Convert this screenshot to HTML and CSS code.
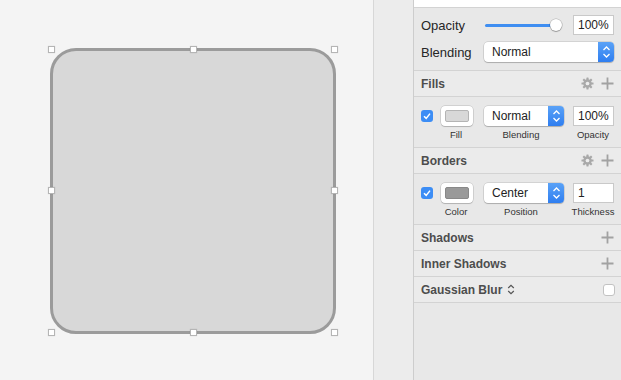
FILE: index.html
```html
<!DOCTYPE html>
<html>
<head>
<meta charset="utf-8">
<link rel="stylesheet" href="styles.css">
</head>
<body>
<div class="app">
  <div class="canvas">
    <div class="shape"></div>
    <span class="handle" style="left:48px;top:46px"></span>
    <span class="handle" style="left:190px;top:46px"></span>
    <span class="handle" style="left:331px;top:46px"></span>
    <span class="handle" style="left:48px;top:187px"></span>
    <span class="handle" style="left:331px;top:187px"></span>
    <span class="handle" style="left:48px;top:329px"></span>
    <span class="handle" style="left:190px;top:329px"></span>
    <span class="handle" style="left:331px;top:329px"></span>
  </div>
  <div class="gutter"></div>
  <div class="inspector">
    <div class="topstrip"></div>
    <div class="general">
      <div class="grow">
        <span class="glabel">Opacity</span>
        <div class="slider"><div class="track"></div><div class="knob"></div></div>
        <div class="field">100%</div>
      </div>
      <div class="grow">
        <span class="glabel">Blending</span>
        <div class="select wide"><span class="seltext">Normal</span><span class="stepper"><svg width="9" height="14" viewBox="0 0 9 14"><path d="M1.5 5 L4.5 2 L7.5 5 M1.5 9 L4.5 12 L7.5 9" fill="none" stroke="#fff" stroke-width="1.3"/></svg></span></div>
      </div>
    </div>

    <div class="head">
      <span class="htitle">Fills</span>
      <span class="hicons">
        <svg class="gear" width="13" height="13" viewBox="0 0 14 14"><g fill="#a9a9a9"><circle cx="7" cy="7" r="4.6"/><rect x="5.8" y="0.5" width="2.4" height="13" rx="0.5"/><rect x="0.5" y="5.8" width="13" height="2.4" rx="0.5"/><rect x="5.8" y="0.5" width="2.4" height="13" rx="0.5" transform="rotate(45 7 7)"/><rect x="5.8" y="0.5" width="2.4" height="13" rx="0.5" transform="rotate(-45 7 7)"/></g><circle cx="7" cy="7" r="2" fill="#ececec"/></svg>
        <svg class="plus" width="13" height="13" viewBox="0 0 13 13"><path d="M6.5 0.5 V12.5 M0.5 6.5 H12.5" stroke="#a2a2a2" stroke-width="1.8"/></svg>
      </span>
    </div>
    <div class="content">
      <div class="crow">
        <span class="check"><svg width="12" height="12" viewBox="0 0 12 12"><path d="M3 6.2 L5.2 8.4 L9 3.6" fill="none" stroke="#fff" stroke-width="1.5"/></svg></span>
        <span class="swatch"><span class="swcol fillcol"></span></span>
        <div class="select narrow"><span class="seltext">Normal</span><span class="stepper"><svg width="9" height="14" viewBox="0 0 9 14"><path d="M1.5 5 L4.5 2 L7.5 5 M1.5 9 L4.5 12 L7.5 9" fill="none" stroke="#fff" stroke-width="1.3"/></svg></span></div>
        <div class="field">100%</div>
      </div>
      <div class="lrow">
        <span class="l1">Fill</span><span class="l2">Blending</span><span class="l3">Opacity</span>
      </div>
    </div>

    <div class="head">
      <span class="htitle">Borders</span>
      <span class="hicons">
        <svg class="gear" width="13" height="13" viewBox="0 0 14 14"><g fill="#a9a9a9"><circle cx="7" cy="7" r="4.6"/><rect x="5.8" y="0.5" width="2.4" height="13" rx="0.5"/><rect x="0.5" y="5.8" width="13" height="2.4" rx="0.5"/><rect x="5.8" y="0.5" width="2.4" height="13" rx="0.5" transform="rotate(45 7 7)"/><rect x="5.8" y="0.5" width="2.4" height="13" rx="0.5" transform="rotate(-45 7 7)"/></g><circle cx="7" cy="7" r="2" fill="#ececec"/></svg>
        <svg class="plus" width="13" height="13" viewBox="0 0 13 13"><path d="M6.5 0.5 V12.5 M0.5 6.5 H12.5" stroke="#a2a2a2" stroke-width="1.8"/></svg>
      </span>
    </div>
    <div class="content">
      <div class="crow">
        <span class="check"><svg width="12" height="12" viewBox="0 0 12 12"><path d="M3 6.2 L5.2 8.4 L9 3.6" fill="none" stroke="#fff" stroke-width="1.5"/></svg></span>
        <span class="swatch"><span class="swcol bordercol"></span></span>
        <div class="select narrow"><span class="seltext">Center</span><span class="stepper"><svg width="9" height="14" viewBox="0 0 9 14"><path d="M1.5 5 L4.5 2 L7.5 5 M1.5 9 L4.5 12 L7.5 9" fill="none" stroke="#fff" stroke-width="1.3"/></svg></span></div>
        <div class="field">1</div>
      </div>
      <div class="lrow">
        <span class="l1">Color</span><span class="l2">Position</span><span class="l3">Thickness</span>
      </div>
    </div>

    <div class="head">
      <span class="htitle">Shadows</span>
      <span class="hicons"><svg class="plus" width="13" height="13" viewBox="0 0 13 13"><path d="M6.5 0.5 V12.5 M0.5 6.5 H12.5" stroke="#a2a2a2" stroke-width="1.8"/></svg></span>
    </div>
    <div class="head">
      <span class="htitle">Inner Shadows</span>
      <span class="hicons"><svg class="plus" width="13" height="13" viewBox="0 0 13 13"><path d="M6.5 0.5 V12.5 M0.5 6.5 H12.5" stroke="#a2a2a2" stroke-width="1.8"/></svg></span>
    </div>
    <div class="head">
      <span class="htitle">Gaussian Blur <svg class="updown" width="8" height="11" viewBox="0 0 8 11"><path d="M1.2 4 L4 1.3 L6.8 4 M1.2 7 L4 9.7 L6.8 7" fill="none" stroke="#555" stroke-width="1.2"/></svg></span>
      <span class="hicons"><span class="box"></span></span>
    </div>
  </div>
</div>
</body>
</html>
```

FILE: styles.css
```css
* { box-sizing: border-box; }
html, body { margin: 0; padding: 0; }
body {
  width: 621px;
  height: 380px;
  overflow: hidden;
  font-family: "Liberation Sans", Arial, sans-serif;
  background: #e9e9e9;
}
.app {
  display: flex;
  height: 380px;
}
.canvas {
  position: relative;
  width: 374px;
  height: 380px;
  background: #f4f4f4;
  border-right: 1px solid #d7d7d7;
  flex: none;
}
.shape {
  position: absolute;
  left: 50px;
  top: 48px;
  width: 286px;
  height: 286px;
  border: 3px solid #9b9b9b;
  border-radius: 26px;
  background: #d8d8d8;
}
.handle {
  position: absolute;
  width: 7px;
  height: 7px;
  background: #fff;
  border: 1px solid #b5b5b5;
  box-shadow: 0 0 1px rgba(0,0,0,0.15);
}
.gutter {
  width: 40px;
  flex: none;
  background: #ececec;
  border-right: 1px solid #cdcdcd;
}
.inspector {
  flex: 1;
  background: #e8e8e8;
  display: flex;
  flex-direction: column;
}
.topstrip {
  height: 8px;
  background: #fff;
  border-bottom: 1px solid #d3d3d3;
}
.general {
  padding: 4px 7px 5px 7px;
  border-bottom: 1px solid #d3d3d3;
  height: 63px;
}
.grow {
  display: flex;
  align-items: center;
  height: 26px;
}
.grow + .grow { padding-top: 2px; }
.glabel {
  width: 63px;
  font-size: 13px;
  color: #262626;
}
.slider {
  position: relative;
  width: 80px;
  height: 20px;
  margin-right: 8px;
}
.track {
  position: absolute;
  left: 1px;
  right: 6px;
  top: 9px;
  height: 3px;
  border-radius: 2px;
  background: #3f8ef1;
}
.knob {
  position: absolute;
  left: 66px;
  top: 4px;
  width: 12px;
  height: 12px;
  border-radius: 50%;
  background: #fff;
  box-shadow: 0 0 0 0.5px rgba(0,0,0,0.25), 0 1px 1px rgba(0,0,0,0.25);
}
.field {
  width: 41px;
  height: 20px;
  background: #fff;
  border: 1px solid #c9c9c9;
  font-size: 12px;
  color: #222;
  padding-left: 4px;
  line-height: 18px;
  margin-left: auto;
}
.select {
  display: flex;
  align-items: center;
  height: 20px;
  background: #fff;
  border-radius: 4px;
  box-shadow: 0 0 0 0.5px rgba(0,0,0,0.18), 0 1px 1px rgba(0,0,0,0.18);
  overflow: hidden;
}
.select.wide { width: 130px; }
.select.narrow { width: 80px; }
.seltext {
  flex: 1;
  padding-left: 8px;
  font-size: 12px;
  color: #222;
}
.stepper {
  width: 16px;
  height: 20px;
  background: linear-gradient(#5aa2f7, #2f7ef0);
  display: flex;
  align-items: center;
  justify-content: center;
}
.head {
  height: 26px;
  display: flex;
  align-items: center;
  padding: 0 7px;
  border-bottom: 1px solid #d3d3d3;
  background: #ebebeb;
}
.htitle {
  font-size: 12px;
  font-weight: bold;
  color: #4d4d4d;
  display: flex;
  align-items: center;
}
.updown { margin-left: 5px; }
.hicons {
  margin-left: auto;
  display: flex;
  align-items: center;
  gap: 7px;
}
.gear { display: block; }
.plus { display: block; }
.box {
  width: 12px;
  height: 12px;
  border-radius: 3px;
  background: #fff;
  border: 1px solid #c2c2c2;
  margin-right: -1px;
}
.content {
  height: 51px;
  padding: 9px 7px 0 7px;
  border-bottom: 1px solid #d3d3d3;
  background: #e8e8e8;
}
.crow {
  display: flex;
  align-items: center;
  height: 20px;
}
.check {
  width: 12px;
  height: 12px;
  border-radius: 3px;
  background: #3c8df5;
  display: flex;
  margin-right: 8px;
}
.swatch {
  width: 32px;
  height: 20px;
  background: #fff;
  border-radius: 4px;
  box-shadow: 0 0 0 0.5px rgba(0,0,0,0.2), 0 1px 1px rgba(0,0,0,0.15);
  padding: 4px 4px;
  margin-right: 11px;
  display: flex;
}
.swcol {
  flex: 1;
  border-radius: 2px;
  border: 1px solid #b4b4b4;
}
.fillcol { background: #d8d8d8; }
.bordercol { background: #999; border-color: #888; }
.lrow {
  position: relative;
  height: 18px;
  margin-top: 2px;
  font-size: 9.5px;
  color: #333;
}
.lrow span {
  position: absolute;
  top: 1px;
  transform: translateX(-50%);
  white-space: nowrap;
}
.l1 { left: 35px; }
.l2 { left: 100px; }
.l3 { left: 172px; }
```
